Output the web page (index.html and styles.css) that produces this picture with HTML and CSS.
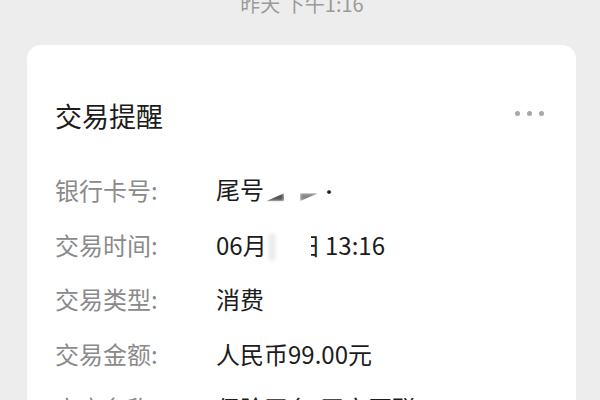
FILE: index.html
```html
<!DOCTYPE html>
<html lang="zh-CN">
<head>
<meta charset="utf-8">
<link rel="stylesheet" href="styles.css">
</head>
<body>
<div class="stamp"><div class="stamp-text">昨天 下午1:16</div></div>
<div class="card">
  <div class="card-head">
    <div class="title">交易提醒</div>
    <div class="more"><span class="dot"></span><span class="dot"></span><span class="dot"></span></div>
  </div>
  <div class="rows">
    <div class="row"><div class="label">银行卡号:</div><div class="value">尾号<span class="smudge s1"></span><span class="smudge s2"></span><span class="dotsm">·</span></div></div>
    <div class="row"><div class="label">交易时间:</div><div class="value">06月<span class="fade"></span><span class="partial"><span class="partial-in">日</span></span>&nbsp;13:16</div></div>
    <div class="row"><div class="label">交易类型:</div><div class="value">消费</div></div>
    <div class="row"><div class="label">交易金额:</div><div class="value">人民币99.00元</div></div>
    <div class="row"><div class="label">商户名称:</div><div class="value">保险平台-平安互联</div></div>
  </div>
</div>
</body>
</html>
```
FILE: styles.css
```css
html, body {
  margin: 0;
  padding: 0;
  background: #ededed;
  font-family: "Noto Sans CJK SC", "Noto Sans", sans-serif;
}
.stamp {
  height: 45px;
  overflow: hidden;
}
.stamp-text {
  margin-top: -6px;
  text-align: center;
  font-size: 20px;
  line-height: 20px;
  color: #9a9a9a;
  padding-left: 4px;
}
.card {
  margin: 0 24px 0 27px;
  background: #fff;
  border-radius: 14px;
  padding: 55px 32px 40px 28px;
  height: 400px;
}
.card-head {
  display: flex;
  align-items: center;
  justify-content: space-between;
  height: 32px;
}
.title {
  font-size: 27px;
  line-height: 32px;
  color: #1c1c1c;
  font-weight: 400;
}
.more {
  display: flex;
  gap: 7px;
  margin-top: -6px;
}
.dot {
  width: 5px;
  height: 5px;
  border-radius: 50%;
  background: #a8a8a8;
}
.rows {
  margin-top: 31px;
}
.row {
  display: flex;
  height: 54.5px;
  align-items: center;
  font-size: 24px;
  line-height: 30px;
}
.label {
  width: 161px;
  color: #8a8a8a;
}
.value {
  color: #1c1c1c;
  white-space: nowrap;
}
.smudge {
  display: inline-block;
  width: 18px;
  height: 8px;
  background: #555;
  filter: blur(1.5px);
  vertical-align: -2px;
  clip-path: polygon(0 0, 100% 100%, 0 100%);
}
.s1 { margin-left: 2px; transform: scaleX(-1); }
.s2 { margin-left: 16px; background: #888; clip-path: polygon(0 0, 100% 0, 0 100%); }
.dotsm { margin-left: 2px; font-size: 18px; }
.fade {
  display: inline-block;
  width: 6px;
  height: 26px;
  background: #e6e6e6;
  filter: blur(2px);
  margin-left: 2px;
  margin-right: 36px;
  vertical-align: -5px;
}
.partial {
  display: inline-block;
  width: 9px;
  overflow: hidden;
  height: 30px;
  vertical-align: top;
}
.partial-in {
  display: inline-block;
  margin-left: -14px;
}
```
